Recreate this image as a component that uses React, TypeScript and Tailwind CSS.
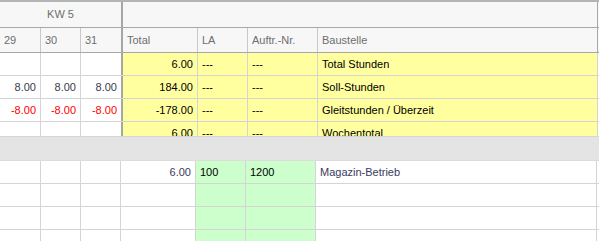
import React from "react";

type Cell = { text?: string; align?: "l" | "r"; color?: string; bg?: string };

const upperCols = ["w-[41px]", "w-[40px]", "w-[42px] border-r-2 border-r-[#a6a6a6]", "w-[75px]", "w-[50px]", "w-[70px]", "w-[280px]"];
const lowerCols = ["w-[41px]", "w-[40px]", "w-[40px]", "w-[75px]", "w-[50px]", "w-[70px]", "w-[281px]"];

const yellow = "bg-[#ffff9f]";
const green = "bg-[#ccffcc]";

const upperRows: Cell[][] = [
  [{}, {}, {}, { text: "6.00", align: "r", bg: yellow }, { text: "---", bg: yellow }, { text: "---", bg: yellow }, { text: "Total Stunden", bg: yellow }],
  [
    { text: "8.00", align: "r", color: "text-[#3a3a4c]" },
    { text: "8.00", align: "r", color: "text-[#3a3a4c]" },
    { text: "8.00", align: "r", color: "text-[#3a3a4c]" },
    { text: "184.00", align: "r", bg: yellow },
    { text: "---", bg: yellow },
    { text: "---", bg: yellow },
    { text: "Soll-Stunden", bg: yellow },
  ],
  [
    { text: "-8.00", align: "r", color: "text-[#ff0000]" },
    { text: "-8.00", align: "r", color: "text-[#ff0000]" },
    { text: "-8.00", align: "r", color: "text-[#ff0000]" },
    { text: "-178.00", align: "r", bg: yellow },
    { text: "---", bg: yellow },
    { text: "---", bg: yellow },
    { text: "Gleitstunden / Überzeit", bg: yellow },
  ],
  [{}, {}, {}, { text: "6.00", align: "r", bg: yellow }, { text: "---", bg: yellow }, { text: "---", bg: yellow }, { text: "Wochentotal", bg: yellow }],
];

const lowerRows: Cell[][] = [
  [{}, {}, {}, { text: "6.00", align: "r", color: "text-[#3a3a5e]" }, { text: "100", bg: green }, { text: "1200", bg: green }, { text: "Magazin-Betrieb", color: "text-[#3a3a5e]" }],
  [{}, {}, {}, {}, { bg: green }, { bg: green }, {}],
  [{}, {}, {}, {}, { bg: green }, { bg: green }, {}],
  [{}, {}, {}, {}, { bg: green }, { bg: green }, {}],
];

function Row({ cells, cols }: { cells: Cell[]; cols: string[] }) {
  return (
    <div className="flex h-[23px] shrink-0 border-b border-[#d4d4d4]">
      {cells.map((c, i) => (
        <div
          key={i}
          className={`${cols[i]} shrink-0 border-r border-[#d4d4d4] flex items-center px-[4px] ${c.align === "r" ? "justify-end" : "justify-start"} ${c.bg ?? ""} ${c.color ?? "text-black"}`}
        >
          {c.text}
        </div>
      ))}
    </div>
  );
}

export default function App() {
  return (
    <div className="w-[599px] h-[241px] overflow-hidden bg-white text-[11px] leading-none" style={{ fontFamily: '"Liberation Sans", Arial, sans-serif' }}>
      {/* upper grid */}
      <div className="h-[136px] overflow-hidden border-t-2 border-[#b4b4b4]">
        <div className="flex h-[26px] border-b border-[#a8a8a8] bg-[#f7f7f7] text-[#6e6e6e]">
          <div className="w-[123px] shrink-0 border-r-2 border-[#a6a6a6] flex items-center justify-center">KW 5</div>
          <div className="w-[475px] shrink-0 border-r border-[#a8a8a8]" />
        </div>
        <div className="flex h-[25px] border-b border-[#a8a8a8] bg-[#f7f7f7] text-[#6e6e6e]">
          {["29", "30", "31", "Total", "LA", "Auftr.-Nr.", "Baustelle"].map((t, i) => (
            <div key={t} className={`${upperCols[i]} shrink-0 flex items-center px-[4px] ${i === 2 ? "" : "border-r border-[#c8c8c8]"} ${i === 6 ? "border-r-[#a8a8a8]" : ""}`}>
              {t}
            </div>
          ))}
        </div>
        {upperRows.map((r, i) => (
          <Row key={i} cells={r} cols={upperCols} />
        ))}
      </div>

      {/* splitter */}
      <div className="h-[25px] bg-[#e4e4e4] border-t border-[#d6d6d6] border-b border-b-[#dcdcdc]" />

      {/* lower grid */}
      <div>
        {lowerRows.map((r, i) => (
          <Row key={i} cells={r} cols={lowerCols} />
        ))}
      </div>
    </div>
  );
}
